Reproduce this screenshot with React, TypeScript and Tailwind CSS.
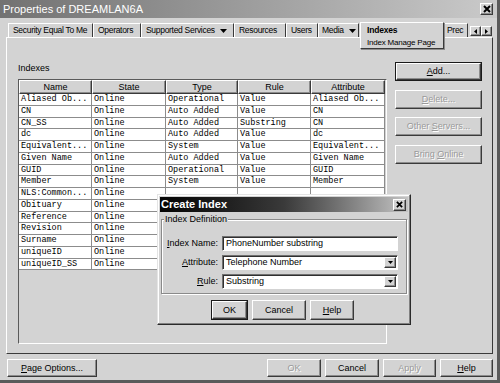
import React from "react";

const rows: string[][] = [
  ["Aliased Ob...", "Online", "Operational", "Value", "Aliased Ob..."],
  ["CN", "Online", "Auto Added", "Value", "CN"],
  ["CN_SS", "Online", "Auto Added", "Substring", "CN"],
  ["dc", "Online", "Auto Added", "Value", "dc"],
  ["Equivalent...", "Online", "System", "Value", "Equivalent..."],
  ["Given Name", "Online", "Auto Added", "Value", "Given Name"],
  ["GUID", "Online", "Operational", "Value", "GUID"],
  ["Member", "Online", "System", "Value", "Member"],
  ["NLS:Common...", "Online", "", "", ""],
  ["Obituary", "Online", "", "", ""],
  ["Reference", "Online", "", "", ""],
  ["Revision", "Online", "", "", ""],
  ["Surname", "Online", "", "", ""],
  ["uniqueID", "Online", "", "", ""],
  ["uniqueID_SS", "Online", "", "", ""],
];

const headers = ["Name", "State", "Type", "Rule", "Attribute"];

const raised =
  "border border-t-white border-l-white border-r-[#3a3a3a] border-b-[#3a3a3a] shadow-[inset_-1px_-1px_0_#8c8c8c]";
const disabledText = "text-[#9a9a9a] [text-shadow:1px_1px_0_#ffffff]";

function Btn({
  w,
  children,
  disabled,
  def,
}: {
  w: string;
  children: React.ReactNode;
  disabled?: boolean;
  def?: boolean;
}) {
  const inner = (
    <div
      className={`${raised} h-full w-full flex items-center justify-center text-[9px] leading-none ${
        disabled ? disabledText : "text-black"
      }`}
    >
      {children}
    </div>
  );
  return (
    <div className={`${w} h-full ${def ? "border border-[#1a1a1a]" : ""}`}>{inner}</div>
  );
}

function Arrow() {
  return (
    <svg width="7" height="4" viewBox="0 0 7 4" className="ml-[5px]">
      <path d="M0 0 L7 0 L3.5 4 Z" fill="#000" />
    </svg>
  );
}

function XIcon({ size = 8 }: { size?: number }) {
  return (
    <svg width={size} height={size} viewBox="0 0 8 8">
      <path d="M1 1 L7 7 M7 1 L1 7" stroke="#000" strokeWidth="2" />
    </svg>
  );
}

function DropBtn() {
  return (
    <div className={`${raised} absolute right-[1px] top-[1px] bottom-[1px] w-[12px] bg-[#d3d3d3] flex items-center justify-center`}>
      <svg width="5" height="3" viewBox="0 0 5 3">
        <path d="M0 0 L5 0 L2.5 3 Z" fill="#000" />
      </svg>
    </div>
  );
}

export default function App() {
  return (
    <div className="relative w-[500px] h-[383px] bg-[#d3d3d3] overflow-hidden flex flex-col font-[family-name:Liberation_Sans,Arial,sans-serif] text-black border-r-[3px] border-r-[#5a5a5a] border-b-[3px] border-b-[#5a5a5a]">
      {/* title bar */}
      <div className="h-[18px] shrink-0 bg-linear-to-r from-[#727272] to-[#cacaca] flex items-center pl-[3px] pr-[4px]">
        <span className="text-[11px] text-white leading-none">Properties of DREAMLAN6A</span>
        <div className={`${raised} ml-auto w-[13px] h-[12px] bg-[#d3d3d3] flex items-center justify-center`}>
          <XIcon />
        </div>
      </div>

      {/* tabs */}
      <div className="mt-[5px] h-[14px] shrink-0 flex items-start text-[8.5px] leading-none tracking-[-0.3px] pl-[8px]">
        <div className="h-[14px] w-[85px] border-l border-t border-l-white border-t-white border-r border-r-[#3a3a3a] flex items-center pl-[4px]">Security Equal To Me</div>
        <div className="h-[14px] w-[48px] border-l border-t border-l-white border-t-white border-r border-r-[#3a3a3a] flex items-center pl-[4px]">Operators</div>
        <div className="h-[14px] w-[93px] border-l border-t border-l-white border-t-white border-r border-r-[#3a3a3a] flex items-center pl-[4px]">Supported Services<Arrow /></div>
        <div className="h-[14px] w-[52px] border-l border-t border-l-white border-t-white border-r border-r-[#3a3a3a] flex items-center pl-[4px]">Resources</div>
        <div className="h-[14px] w-[32px] border-l border-t border-l-white border-t-white border-r border-r-[#3a3a3a] flex items-center pl-[4px]">Users</div>
        <div className="h-[14px] w-[41px] border-l border-t border-l-white border-t-white border-r border-r-[#3a3a3a] flex items-center pl-[3px]">Media<Arrow /></div>
        <div className="relative z-10 -mt-[1px] h-[27px] w-[84px] ml-[1px] bg-[#d3d3d3] border border-t-white border-l-white border-r-[#3a3a3a] border-b-[#3a3a3a] shadow-[1px_1px_0_#8c8c8c] flex flex-col pl-[6px] pt-[3px]">
          <span className="font-bold text-[8.5px] tracking-[-0.2px]">Indexes</span>
          <span className="text-[8px] mt-[4px] tracking-[-0.2px]">Index Manage Page</span>
        </div>
        <div className="h-[14px] w-[24px] border-l border-t border-l-white border-t-white border-r border-r-[#3a3a3a] flex items-center pl-[2px] overflow-hidden">Prec</div>
        <div className="ml-[2px] mt-[3px] flex">
          <div className={`${raised} w-[11px] h-[10px] flex items-center justify-center bg-[#d3d3d3]`}>
            <svg width="3" height="5" viewBox="0 0 3 5"><path d="M3 0 L0 2.5 L3 5 Z" fill="#000" /></svg>
          </div>
          <div className={`${raised} w-[11px] h-[10px] flex items-center justify-center bg-[#d3d3d3]`}>
            <svg width="3" height="5" viewBox="0 0 3 5"><path d="M0 0 L3 2.5 L0 5 Z" fill="#000" /></svg>
          </div>
        </div>
      </div>

      {/* panel */}
      <div className="ml-[6px] w-[487px] h-[317px] shrink-0 border border-t-white border-l-white border-r-[#3a3a3a] border-b-[#3a3a3a] flex">
        <div className="pl-[11px] flex flex-col">
          <div className="mt-[25px] h-[11px] text-[9px] leading-[11px]">Indexes</div>
          <div className="mt-[5px] w-[369px] h-[265px] border border-t-[#5a5a5a] border-l-[#5a5a5a] border-r-white border-b-white">
            <div className="grid grid-cols-[73px_74px_72px_73px_74px] w-[366px]">
              {headers.map((h) => (
                <div key={h} className={`${raised} h-[14px] bg-[#d3d3d3] flex items-center justify-center text-[9px] leading-none`}>
                  {h}
                </div>
              ))}
              {rows.map((r, i) =>
                r.map((c, j) => (
                  <div
                    key={`${i}-${j}`}
                    className="h-[11.75px] bg-white border-r border-b border-[#8c8c8c] pl-[2px] font-[family-name:Liberation_Mono,Courier_New,monospace] text-[8.5px] leading-[11px] whitespace-nowrap overflow-hidden"
                  >
                    {c}
                  </div>
                ))
              )}
            </div>
          </div>
        </div>
        <div className="ml-[8px] pt-[24px] flex flex-col gap-[8.5px]">
          <div className="h-[19px]">
            <Btn w="w-[87px]" def>
              <span><u>A</u>dd...</span>
            </Btn>
          </div>
          <div className="h-[19px]">
            <Btn w="w-[87px]" disabled>
              <span><u>D</u>elete...</span>
            </Btn>
          </div>
          <div className="h-[19px]">
            <Btn w="w-[87px]" disabled>
              <span>Other <u>S</u>ervers...</span>
            </Btn>
          </div>
          <div className="h-[19px]">
            <Btn w="w-[87px]" disabled>
              <span>Bring <u>O</u>nline</span>
            </Btn>
          </div>
        </div>
      </div>

      {/* bottom buttons */}
      <div className="mt-[5px] h-[18px] flex pr-[4px]">
        <div className="ml-[7px]">
          <Btn w="w-[90px]">
            <span><u>P</u>age Options...</span>
          </Btn>
        </div>
        <div className="ml-auto flex gap-[4px]">
          <Btn w="w-[54px]" disabled>OK</Btn>
          <Btn w="w-[54px]">Cancel</Btn>
          <Btn w="w-[53px]" disabled>Apply</Btn>
          <Btn w="w-[53px]">
            <span><u>H</u>elp</span>
          </Btn>
        </div>
      </div>

      {/* Create Index dialog */}
      <div className="absolute left-[157px] top-[194px] w-[254px] h-[131px] bg-[#d3d3d3] border border-t-[#e4e4e4] border-l-[#e4e4e4] border-r-[#2a2a2a] border-b-[#2a2a2a] shadow-[inset_-1px_-1px_0_#808080,inset_1px_1px_0_#ffffff] p-[2px] flex flex-col">
        <div className="h-[15px] bg-linear-to-r from-[#050505] via-[#3a3a3a] to-[#c4c4c4] flex items-center pl-[1px] pr-[2px]">
          <span className="text-white font-bold text-[11px] leading-none">Create Index</span>
          <div className={`${raised} ml-auto w-[13px] h-[12px] bg-[#d3d3d3] flex items-center justify-center`}>
            <XIcon size={7} />
          </div>
        </div>
        <div className="relative mt-[7px] mx-[1px] h-[75px] border border-[#8a8a8a] shadow-[1px_1px_0_#ffffff,inset_1px_1px_0_#ffffff] pt-[16px] flex flex-col gap-[4px]">
          <span className="absolute -top-[6px] left-[2px] px-[1px] bg-[#d3d3d3] text-[9px] leading-[11px]">Index Definition</span>
          <div className="flex items-center h-[15px]">
            <div className="w-[56px] text-right text-[9px] leading-none"><u>I</u>ndex Name:</div>
            <div className="ml-[4px] w-[176px] h-full bg-white border border-t-[#707070] border-l-[#707070] border-r-white border-b-white shadow-[inset_1px_1px_0_#303030] flex items-center pl-[3px] text-[9px] leading-none">
              PhoneNumber substring
            </div>
          </div>
          <div className="flex items-center h-[15px]">
            <div className="w-[56px] text-right text-[9px] leading-none"><u>A</u>ttribute:</div>
            <div className="relative ml-[4px] w-[176px] h-full bg-white border border-t-[#707070] border-l-[#707070] border-r-white border-b-white shadow-[inset_1px_1px_0_#303030] flex items-center pl-[3px] text-[9px] leading-none">
              Telephone Number
              <DropBtn />
            </div>
          </div>
          <div className="flex items-center h-[15px]">
            <div className="w-[56px] text-right text-[9px] leading-none"><u>R</u>ule:</div>
            <div className="relative ml-[4px] w-[176px] h-full bg-white border border-t-[#707070] border-l-[#707070] border-r-white border-b-white shadow-[inset_1px_1px_0_#303030] flex items-center pl-[3px] text-[9px] leading-none">
              Substring
              <DropBtn />
            </div>
          </div>
        </div>
        <div className="mt-[6px] h-[20px] flex pl-[51px] gap-[4px]">
          <Btn w="w-[37px]" def>OK</Btn>
          <Btn w="w-[54px]">Cancel</Btn>
          <Btn w="w-[44px]">
            <span><u>H</u>elp</span>
          </Btn>
        </div>
      </div>
    </div>
  );
}
